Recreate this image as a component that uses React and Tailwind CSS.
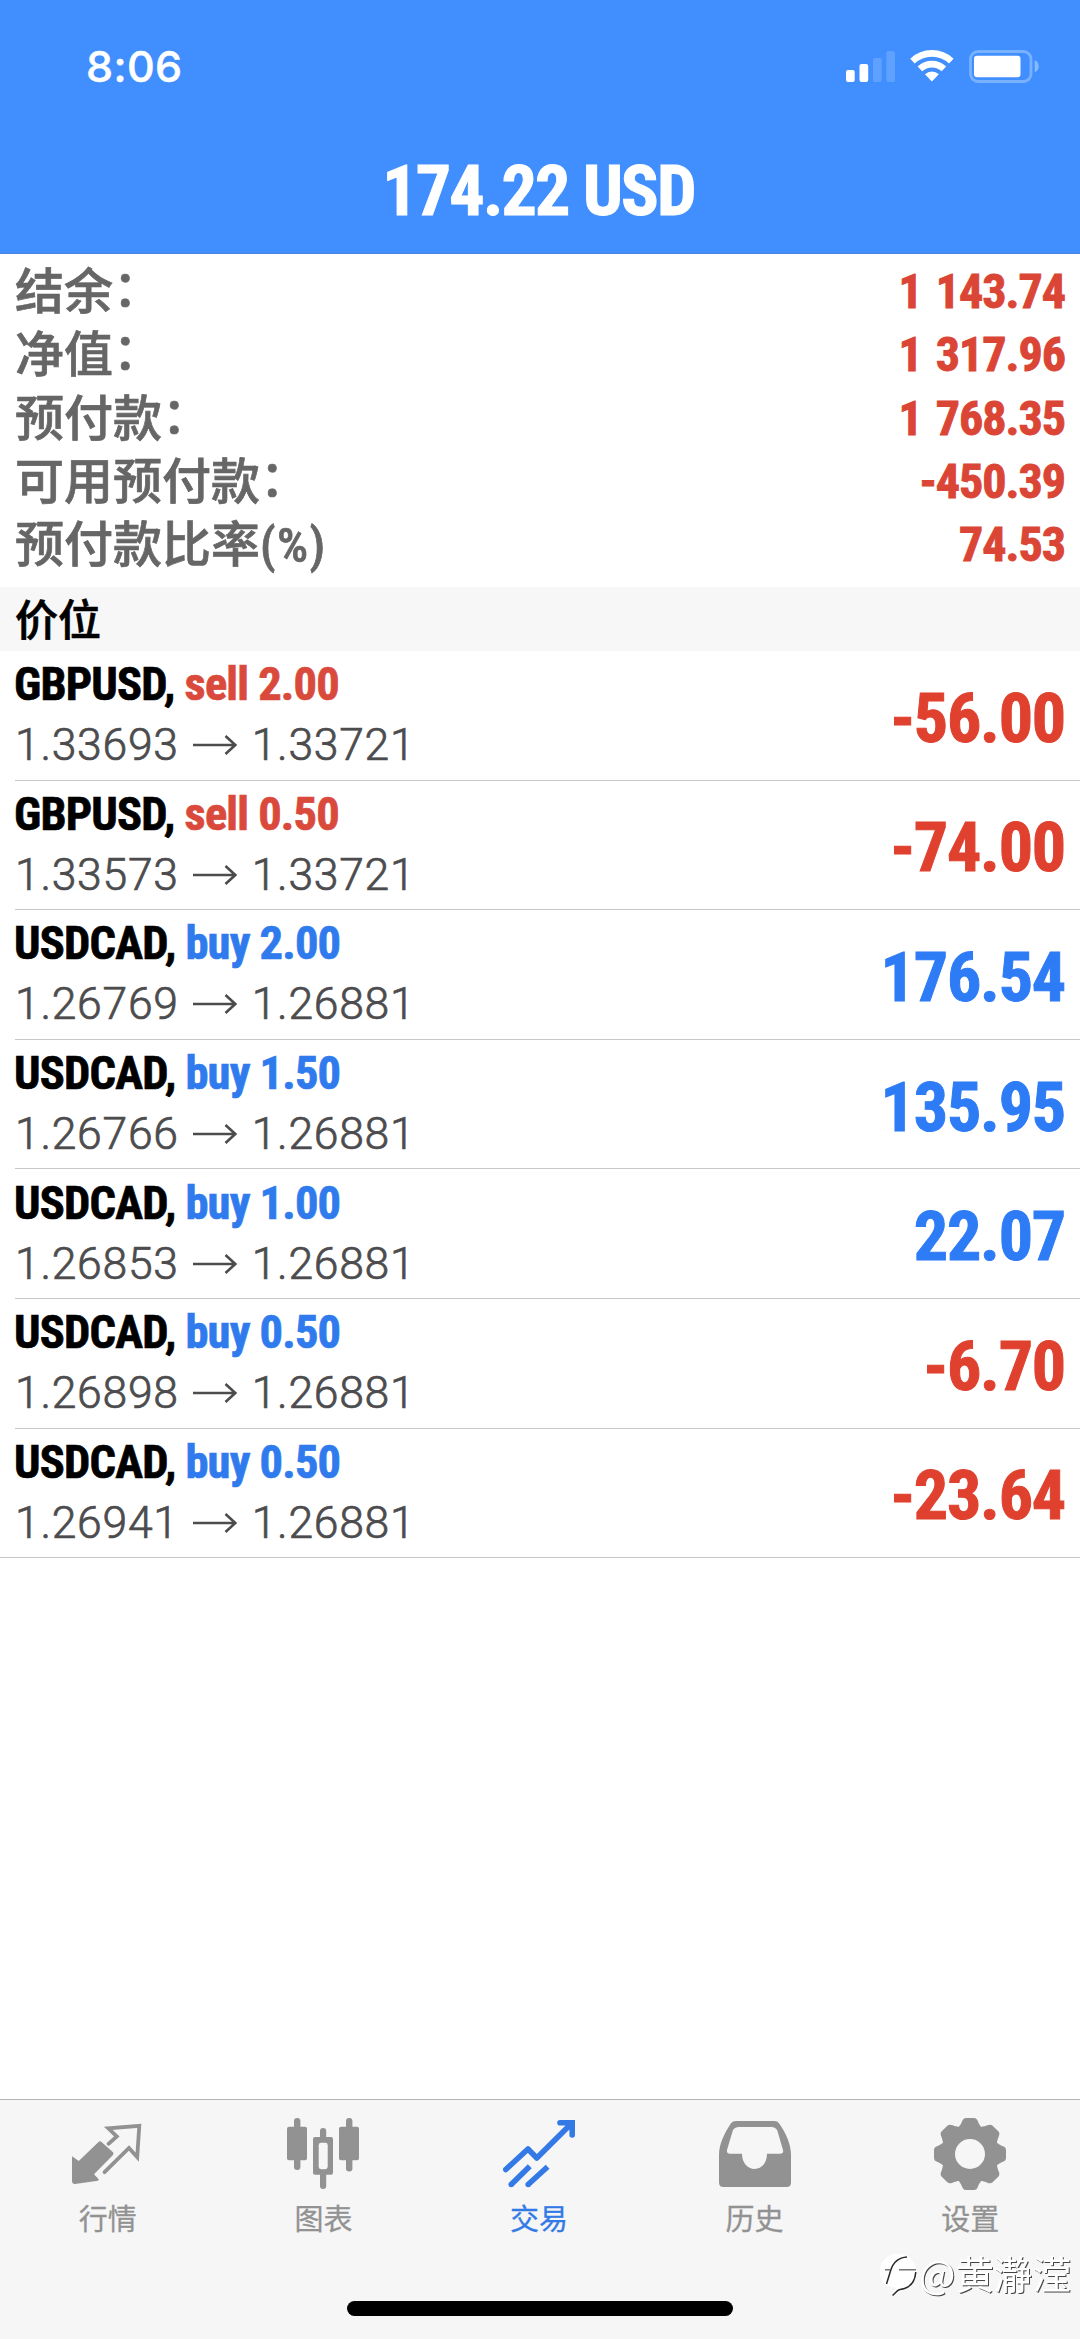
const SUMMARY = [
  { label: "结余", colon: true, value: "1 143.74" },
  { label: "净值", colon: true, value: "1 317.96" },
  { label: "预付款", colon: true, value: "1 768.35" },
  { label: "可用预付款", colon: true, value: "-450.39" },
  { label: "预付款比率", suffix: "(%)", value: "74.53" },
];

const POSITIONS = [
  { symbol: "GBPUSD", side: "sell", lots: "2.00", open: "1.33693", now: "1.33721", profit: "-56.00" },
  { symbol: "GBPUSD", side: "sell", lots: "0.50", open: "1.33573", now: "1.33721", profit: "-74.00" },
  { symbol: "USDCAD", side: "buy", lots: "2.00", open: "1.26769", now: "1.26881", profit: "176.54" },
  { symbol: "USDCAD", side: "buy", lots: "1.50", open: "1.26766", now: "1.26881", profit: "135.95" },
  { symbol: "USDCAD", side: "buy", lots: "1.00", open: "1.26853", now: "1.26881", profit: "22.07" },
  { symbol: "USDCAD", side: "buy", lots: "0.50", open: "1.26898", now: "1.26881", profit: "-6.70" },
  { symbol: "USDCAD", side: "buy", lots: "0.50", open: "1.26941", now: "1.26881", profit: "-23.64" },
];

function SignalIcon() {
  return (
    <svg width="49" height="31" viewBox="0 0 49 31" fill="white">
      <rect x="0" y="19" width="8.7" height="12" rx="2" />
      <rect x="13.5" y="13" width="8.7" height="18" rx="2" />
      <rect x="27" y="7" width="8.7" height="24" rx="2" opacity="0.16" />
      <rect x="40.3" y="0" width="8.7" height="31" rx="2" opacity="0.16" />
    </svg>
  );
}

function WifiIcon() {
  return (
    <svg width="44" height="32" viewBox="0 0 44 32" fill="none" stroke="white">
      <path d="M2.5 11.1A28.2 28.2 0 0 1 41.3 11.1" strokeWidth="6.6" />
      <path d="M9.9 18.9A17.4 17.4 0 0 1 33.9 18.9" strokeWidth="6.6" />
      <path d="M21.9 31.5L15 24.2A10 10 0 0 1 28.8 24.2Z" fill="white" stroke="none" />
    </svg>
  );
}

function BatteryIcon() {
  return (
    <svg width="70" height="33" viewBox="0 0 70 33" fill="white">
      <rect x="1.5" y="1.5" width="60.5" height="30" rx="7.5" fill="none" stroke="#78b2ff" strokeWidth="2.8" />
      <rect x="5" y="5.7" width="46.5" height="21.6" rx="3" />
      <path d="M65.7 10.3C71 12 71 20.5 65.7 22.3Z" fill="#84bcff" />
    </svg>
  );
}

function QuotesIcon() {
  return (
    <svg width="72" height="72" viewBox="0 0 72 72">
      <path d="M0 38.3L6.8 43L26.5 24Q28 22.5 29.5 24L41 34.3Q42 35.7 41 37L22 56.3L26.5 61Q27 62 26 62.7L3 66Q0 66 0 63Z" fill="currentColor" />
      <path d="M36.5 25.8L44.8 18.4L36.3 10.4L67.3 7.8L65.2 39.2L57 30L32.5 54.2" fill="none" stroke="currentColor" strokeWidth="3.8" strokeLinecap="round" strokeLinejoin="miter" />
    </svg>
  );
}

function ChartsIcon() {
  return (
    <svg width="72" height="72" viewBox="0 0 72 72" fill="currentColor">
      <rect x="7" y="0" width="6.4" height="52" rx="3" />
      <rect x="0" y="8.8" width="20" height="33.4" rx="2" />
      <rect x="33" y="10" width="6.2" height="61" rx="3" />
      <rect x="26" y="19" width="20" height="37.7" rx="2" />
      <rect x="31.7" y="24.8" width="9" height="26.4" rx="2.4" fill="#f6f6f6" />
      <rect x="59" y="0" width="6.4" height="53.5" rx="3" />
      <rect x="52" y="8.8" width="20" height="33.4" rx="2" />
    </svg>
  );
}

function TradeIcon() {
  return (
    <svg width="72" height="72" viewBox="0 0 72 72" fill="none" stroke="currentColor" strokeWidth="5.6">
      <path d="M2.8 51.5L25 31L33.8 40L66 8" strokeLinecap="round" strokeLinejoin="round" />
      <path d="M57 4.8H69.2V17" strokeLinecap="round" />
      <path d="M8.5 66.3L26.8 48.3M25.4 66.3L44.6 48.8" />
      <g fill="currentColor" stroke="none">
        <circle cx="8.2" cy="66.5" r="2.8" />
        <circle cx="25.2" cy="66.5" r="2.8" />
        <path d="M60 5H69.5V15Z" />
      </g>
    </svg>
  );
}

function HistoryIcon() {
  return (
    <svg width="72" height="72" viewBox="0 0 72 72" fill="currentColor">
      <path
        fillRule="evenodd"
        d="M12 5.2Q13.6 3 17 3H55.5Q58.5 3 60 5.2C67 15 72 26 72 37V64.5Q72 69 67.5 69H4.5Q0 69 0 64.5V37C0 26 5.5 15 12 5.2ZM20 9Q15.5 9 13.8 12.6L8 32Q7.4 35.8 11 35.8H23C23 45 28.5 51 35.5 51S48 45 48 35.8H61Q65 35.8 64 32L58.3 12.6Q56.6 9 52.5 9Z"
      />
    </svg>
  );
}

function SettingsIcon() {
  return (
    <svg width="72" height="72" viewBox="-36 -36 72 72">
      <circle r="22" fill="none" stroke="currentColor" strokeWidth="14" />
      {[0, 45, 90, 135, 180, 225, 270, 315].map((angle) => (
        <path
          key={angle}
          transform={`rotate(${angle})`}
          d="M-12.5 -25C-9.8 -29 -9 -30 -8 -32.5Q-6.8 -36 -4 -36H4Q6.8 -36 8 -32.5C9 -30 9.8 -29 12.5 -25Z"
          fill="currentColor"
        />
      ))}
    </svg>
  );
}

function ArrowIcon() {
  return (
    <svg className="mr-[15px] ml-[14px]" width="44" height="20" viewBox="0 0 44 20" fill="none" stroke="currentColor" strokeWidth="2.6">
      <path d="M0 10H42M32.5 1L42.3 10L32.5 19" />
    </svg>
  );
}

const TABS = [
  { label: "行情", Icon: QuotesIcon },
  { label: "图表", Icon: ChartsIcon },
  { label: "交易", Icon: TradeIcon, active: true },
  { label: "历史", Icon: HistoryIcon },
  { label: "设置", Icon: SettingsIcon },
];

function StatusBar() {
  return (
    <div className="flex h-[132px] items-center justify-between pl-[86px] pr-[41px] text-white">
      <span className="font-['Inter'] text-[43px] leading-none font-medium tracking-[0.4px] [-webkit-text-stroke:0.5px_#ffffff]">8:06</span>
      <div className="flex items-center">
        <SignalIcon />
        <div className="ml-[15px]">
          <WifiIcon />
        </div>
        <div className="ml-[15px]">
          <BatteryIcon />
        </div>
      </div>
    </div>
  );
}

function SummaryRow({ label, colon, suffix, value }) {
  return (
    <div className="flex h-[63.3px] items-center justify-between leading-[63px]">
      <span className="pt-[2px] text-[49px] font-medium text-[#666666] [-webkit-text-stroke:0.7px_#666666]">
        {label}
        {colon && <span className="relative -top-[3px]">：</span>}
        {suffix && <span className="tracking-[1.3px]">{suffix}</span>}
      </span>
      <span className="text-[48px] font-bold tracking-[-1px] text-[#da4535] [-webkit-text-stroke:0.9px_#da4535] [word-spacing:4px]">{value}</span>
    </div>
  );
}

function PositionRow({ symbol, side, lots, open, now, profit, last }) {
  return (
    <div className={last ? "border-b border-[#c8c8c8] pl-[15px]" : "pl-[15px]"}>
      <div className={last ? "flex h-[128.6px] items-center justify-between pr-[15px]" : "flex h-[129.6px] items-center justify-between border-b border-[#c8c8c8] pr-[15px]"}>
        <div className="h-[122px]">
          <div className="-ml-px text-[46.5px] leading-[60px] font-bold tracking-[-0.8px] text-black [-webkit-text-stroke:0.7px_currentColor]">
            {symbol},{" "}
            <span className={side === "sell" ? "text-[#da4a3c]" : "text-[#2f7bee]"}>
              {side} {lots}
            </span>
          </div>
          <div className="flex h-[61px] items-center pt-px font-['Roboto'] text-[44.5px] leading-[60px] font-light tracking-[0.7px] text-[#4c4c4e] [-webkit-text-stroke:0.7px_#4c4c4e]">
            <span>{open}</span>
            <ArrowIcon />
            <span>{now}</span>
          </div>
        </div>
        <span
          className={
            profit.startsWith("-")
              ? "pt-[7px] text-[68px] leading-[80px] font-bold tracking-[-1.2px] text-[#e0412f] [-webkit-text-stroke:1px_#e0412f]"
              : "pt-[7px] text-[68px] leading-[80px] font-bold tracking-[-1.2px] text-[#2e7bf6] [-webkit-text-stroke:1px_#2e7bf6]"
          }
        >
          {profit}
        </span>
      </div>
    </div>
  );
}

function TabBar() {
  return (
    <nav className="flex h-[240px] flex-col items-center border-t border-[#b4b4b4] bg-[#f6f6f6]">
      <div className="grid w-full grid-cols-5 pt-[18px] pr-[2px]">
        {TABS.map(({ label, Icon, active }) => (
          <div key={label} className={active ? "flex flex-col items-center text-[#347ae6]" : "flex flex-col items-center text-[#929292]"}>
            <Icon />
            <span className="mt-[14px] text-[29px] leading-[32px] [-webkit-text-stroke:0.3px_currentColor]">{label}</span>
          </div>
        ))}
      </div>
      <div className="mt-[65px] h-[15px] w-[386px] rounded-full bg-black" />
    </nav>
  );
}

function Watermark() {
  return (
    <div className="absolute right-[9px] bottom-[36px] flex items-center text-white">
      <svg width="38" height="44" viewBox="0 0 38 44">
        <path d="M18 0A17.5 17.5 0 0 1 36 18C35 30 24 36 12.5 42L16 34L6 31A17.5 17.5 0 0 1 18 0Z" fill="white" />
        <g fill="none" stroke="#2a2a2a" strokeWidth="1.5">
          <path d="M6.5 30L10.5 17C13 8.5 18 3.5 27 3" />
          <path d="M35.8 18C35 30 28 34.5 20 35.5C17 36 15.5 39 12.5 41.5" />
          <path d="M5 15.800H10M19 15.800H36" stroke="#777777" />
        </g>
      </svg>
      <span className="mb-[8px] ml-px font-['Noto_Sans_CJK_SC'] text-[38.5px] leading-[46px] [filter:drop-shadow(1.4px_1.4px_0px_#444444)]">@黄瀞滢</span>
    </div>
  );
}

export default function App() {
  return (
    <div className="relative flex h-[2339px] w-[1080px] flex-col overflow-hidden bg-white font-['Roboto_Condensed','Noto_Sans_CJK_SC',sans-serif]">
      <header className="h-[254px] border-b border-[#4a86dc] bg-[#418fff]">
        <StatusBar />
        <h1 className="h-[118px] pt-[14px] pr-[3px] text-center text-[70px] leading-[90px] font-bold tracking-[-1.8px] text-white [-webkit-text-stroke:1px_#ffffff]">174.22 USD</h1>
      </header>
      <section className="h-[333px] px-[15px] pt-[6px]">
        {SUMMARY.map((row) => (
          <SummaryRow key={row.label} {...row} />
        ))}
      </section>
      <div className="h-[64px] bg-[#f7f7f7] pt-[4px] pl-[15px] text-[43px] leading-[60px] font-medium text-black [-webkit-text-stroke:0.7px_#000000]">价位</div>
      <main className="flex-1">
        {POSITIONS.map((row, i) => (
          <PositionRow key={i} {...row} last={i === POSITIONS.length - 1} />
        ))}
      </main>
      <TabBar />
      <Watermark />
    </div>
  );
}
